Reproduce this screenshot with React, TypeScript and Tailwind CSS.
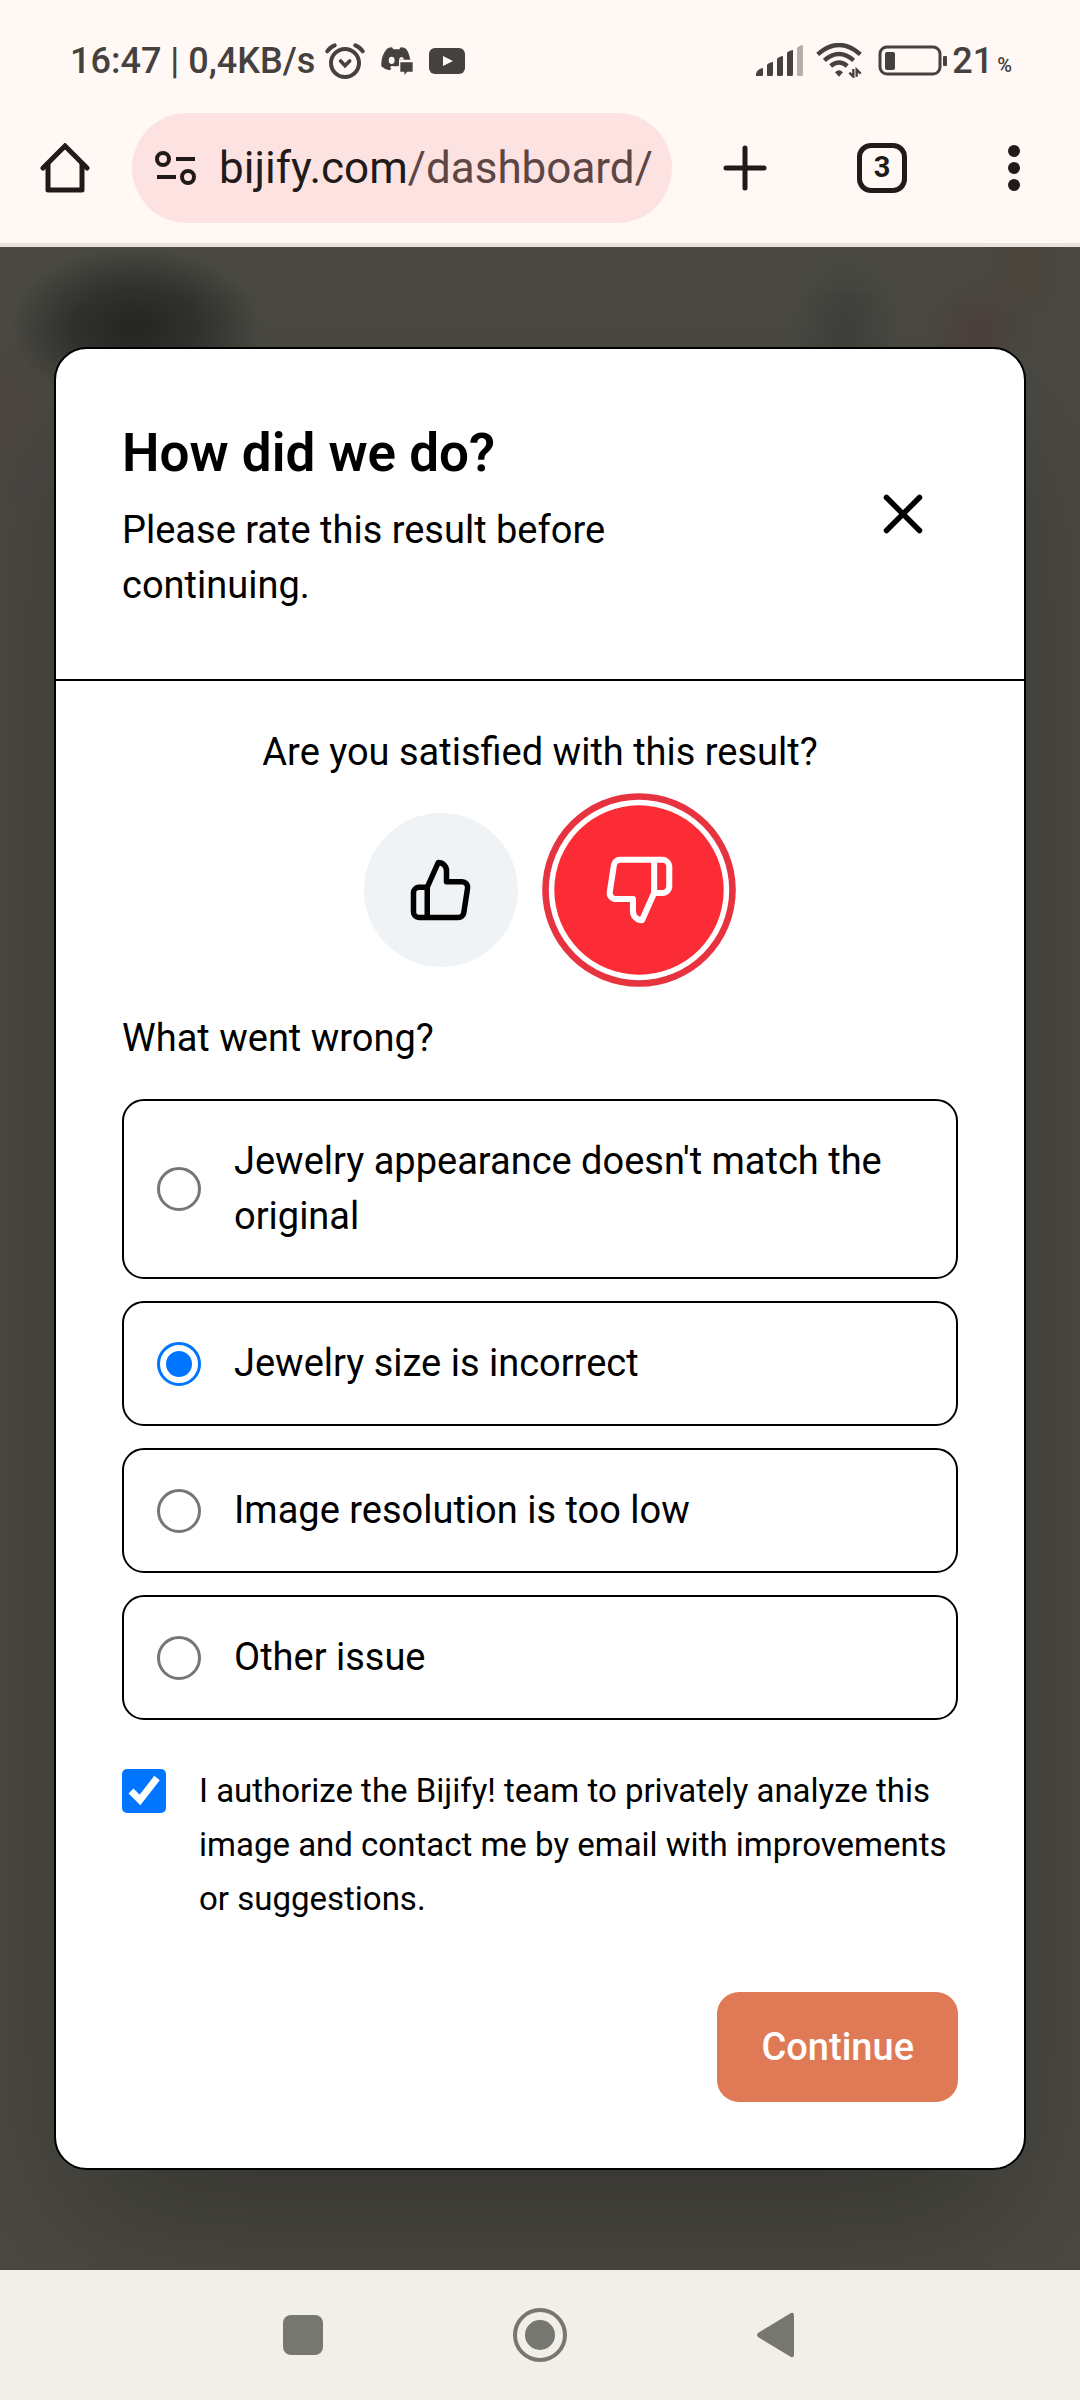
import { useState } from 'react';
import { FiThumbsDown, FiThumbsUp, FiX } from 'react-icons/fi';

const issues = [
  { id: 'appearance', label: "Jewelry appearance doesn't match the original" },
  { id: 'size', label: 'Jewelry size is incorrect' },
  { id: 'resolution', label: 'Image resolution is too low' },
  { id: 'other', label: 'Other issue' },
];

function StatusBar() {
  return (
    <div className="flex h-[113px] items-center justify-between pt-2 pr-[68px] pl-[70px] text-[#45413e]">
      <div className="flex items-center">
        <span className="text-[36px] font-medium">16:47 | 0,4KB/s</span>
        <svg className="ml-[10px] h-9 w-10" viewBox="0 0 120 108" fill="none" stroke="currentColor">
          <circle cx="60" cy="60" r="42" strokeWidth="12" />
          <path d="M7 25Q14 13 29 7M113 25Q106 13 91 7" strokeWidth="12" strokeLinecap="round" />
          <path d="M47 54l13 14 14-14" strokeWidth="11" strokeLinecap="round" />
        </svg>
        <svg className="ml-4 h-7 w-8" viewBox="0 0 96 84" fill="currentColor">
          <path
            fillRule="evenodd"
            d="M18 5Q26 1 33 1L37 7H55L59 1Q66 1 75 5Q84 16 88 38H54V56Q42 60 32 56L27 62L32 65L25 70Q10 67 1 58Q-1 26 18 5ZM32 29a9 11 0 1 0 0 22a9 11 0 0 0 0-22ZM63 30a9 10 0 0 0-9 9h16q-2-8-7-9Z"
          />
          <path d="M58 46H95V74H79L70 83V74H58Z" />
        </svg>
        <svg className="ml-4 h-7 w-9" viewBox="0 0 36 28">
          <rect x="0" y="1" width="36" height="26" rx="6" fill="currentColor" />
          <path d="M14 9v10l10-5z" fill="#fff8f4" />
        </svg>
      </div>
      <div className="flex items-center">
        <svg className="h-8 w-12" viewBox="0 0 48 32" fill="currentColor">
          <path d="M0 31v-2q1-5 7-6v7q0 1-1 1zM11 30V20q1-2 6-3v12q0 2-1 2h-4q-1 0-1-1zM21 30V14q1-2 6-3v18q0 2-1 2h-4q-1 0-1-1zM31 30V8q1-2 6-3v24q0 2-1 2h-4q-1 0-1-1z" />
          <path d="M41 30V3q1-2 6-3v29q0 2-1 2h-4q-1 0-1-1z" opacity="0.4" />
        </svg>
        <svg className="ml-3 h-[35px] w-[46px]" viewBox="0 0 138 105" fill="none" stroke="currentColor">
          <path d="M5 34Q69-22 133 34M25 52Q69 14 113 52M44 69Q69 48 94 69" strokeWidth="13" />
          <path d="M57 88q12-12 24 0l-12 13z" fill="currentColor" stroke="none" />
          <path d="M112 78v23l-12-12M122 101V80l12 12" strokeWidth="7" />
        </svg>
        <svg className="ml-4 h-8 w-[70px]" viewBox="0 0 70 32" fill="none">
          <rect x="2" y="2" width="60" height="27" rx="7" stroke="currentColor" strokeWidth="3" />
          <rect x="7" y="7" width="10" height="18" rx="2" fill="currentColor" />
          <rect x="65" y="11" width="4" height="10" rx="1" fill="currentColor" />
        </svg>
        <span className="ml-1 text-[36px] font-medium">21</span>
        <span className="mt-2 ml-1 text-[20px] font-medium">%</span>
      </div>
    </div>
  );
}

function BrowserBar() {
  return (
    <div className="flex h-[134px] items-start border-b-4 border-[#ebe1dd] pr-[60px] pl-10 text-[#211a18]">
      <div className="flex h-[110px] w-full items-center">
        <button type="button" aria-label="Home">
          <svg className="size-[50px]" viewBox="0 0 50 50" fill="none" stroke="currentColor" strokeWidth="5">
            <path d="M3 25L25 3l22 22" strokeLinecap="round" />
            <path d="M8 20v27h34V20" strokeLinejoin="round" />
          </svg>
        </button>
        <div className="ml-[42px] flex h-full min-w-0 flex-1 items-center rounded-full bg-[#fce2e1] pr-4 pl-[23px]">
          <svg className="h-9 w-[42px] shrink-0" viewBox="0 0 42 36" fill="none" stroke="currentColor" strokeWidth="4">
            <circle cx="8" cy="9" r="6" />
            <path d="M21 9h19M2 27h19" />
            <circle cx="33" cy="27" r="6" />
          </svg>
          <button
            type="button"
            className="ml-[22px] min-w-0 flex-1 text-left text-[44px] whitespace-nowrap"
          >
            bijify.com<span className="text-[#5d4644]">/dashboard/</span>
          </button>
        </div>
        <button type="button" aria-label="New tab" className="ml-[51px]">
          <svg className="h-[46px] w-11" viewBox="0 0 44 46" stroke="currentColor" strokeWidth="5" strokeLinecap="round">
            <path d="M3 23h38M22 3v40" />
          </svg>
        </button>
        <button
          type="button"
          aria-label="Tabs"
          className="ml-[90px] flex size-[50px] items-center justify-center rounded-[14px] border-[5px] border-current text-[29px] font-bold"
        >
          3
        </button>
        <button type="button" aria-label="Menu" className="ml-[101px]">
          <svg className="h-[46px] w-3" viewBox="0 0 12 46" fill="currentColor">
            <circle cx="6" cy="6" r="6" />
            <circle cx="6" cy="23" r="6" />
            <circle cx="6" cy="40" r="6" />
          </svg>
        </button>
      </div>
    </div>
  );
}

function FeedbackDialog() {
  const [satisfied, setSatisfied] = useState(false);
  const [issue, setIssue] = useState('size');
  const [authorized, setAuthorized] = useState(true);

  return (
    <div
      role="dialog"
      aria-labelledby="dialog-title"
      className="w-full rounded-[33px] border-2 border-black bg-white text-[38px] leading-[55px] text-black shadow-[0_69px_138px_-33px_rgba(0,0,0,0.3)]"
    >
      <div className="flex items-center justify-between gap-[66px] border-b-2 border-black p-[66px]">
        <div>
          <h2 id="dialog-title" className="mb-[11px] text-[53px] leading-[77px] font-semibold">
            How did we do?
          </h2>
          <p>Please rate this result before continuing.</p>
        </div>
        <button type="button" aria-label="Close" className="flex size-[110px] shrink-0 items-center justify-center">
          <FiX className="size-[66px]" />
        </button>
      </div>

      <div className="px-[66px] pt-[44px] pb-[66px]">
        <p className="text-center">Are you satisfied with this result?</p>
        <div className="mt-[33px] flex justify-center gap-[44px]">
          <button
            type="button"
            aria-label="Satisfied"
            aria-pressed={satisfied}
            onClick={() => setSatisfied(true)}
            className="flex size-[154px] items-center justify-center rounded-full bg-[#f0f3f6]"
          >
            <FiThumbsUp className="size-[66px]" />
          </button>
          <button
            type="button"
            aria-label="Not satisfied"
            aria-pressed={!satisfied}
            onClick={() => setSatisfied(false)}
            className="flex size-[154px] scale-110 items-center justify-center rounded-full bg-[#fb2c36] text-white ring-6 ring-[#e7333f] ring-offset-5"
          >
            <FiThumbsDown className="size-[66px]" />
          </button>
        </div>

        <fieldset className="mt-[44px]">
          <legend>What went wrong?</legend>
          <div className="mt-[33px] flex flex-col gap-[22px]">
            {issues.map(({ id, label }) => (
              <label key={id} className="flex items-center gap-[33px] rounded-[22px] border-2 border-black p-[33px]">
                <input
                  type="radio"
                  name="issue"
                  value={id}
                  checked={issue === id}
                  onChange={() => setIssue(id)}
                  className="flex size-[44px] shrink-0 appearance-none items-center justify-center rounded-full border-3 border-[#767676] before:size-[26px] before:rounded-full checked:border-[#0075ff] checked:before:bg-[#0075ff]"
                />
                <span>{label}</span>
              </label>
            ))}
          </div>
        </fieldset>

        <label className="mt-[44px] flex items-start gap-[33px] text-[33px] leading-[54px]">
          <span className="relative mt-[5px] size-[44px] shrink-0">
            <input
              type="checkbox"
              checked={authorized}
              onChange={(e) => setAuthorized(e.target.checked)}
              className="block size-[44px] appearance-none rounded-[5px] border-3 border-[#767676] checked:border-[#0075ff] checked:bg-[#0075ff]"
            />
            {authorized && (
              <svg
                className="pointer-events-none absolute inset-0 size-[44px]"
                viewBox="0 0 44 44"
                fill="none"
                stroke="#fff"
                strokeWidth="7"
              >
                <path d="M9 22l9 9L35 9" />
              </svg>
            )}
          </span>
          <span>
            I authorize the Bijify! team to privately analyze this image and contact me by email with improvements or
            suggestions.
          </span>
        </label>

        <div className="mt-[66px] flex justify-end">
          <button type="button" className="h-[110px] rounded-[22px] bg-[#df7956] px-[44px] font-medium text-white">
            Continue
          </button>
        </div>
      </div>
    </div>
  );
}

function NavigationBar() {
  return (
    <nav className="flex h-[130px] items-center justify-center gap-[190px] bg-[#f2efea] pr-1 text-[#777771]">
      <button type="button" aria-label="Recent apps">
        <span className="block size-10 rounded-lg bg-current" />
      </button>
      <button type="button" aria-label="Home screen">
        <svg className="size-[54px]" viewBox="0 0 54 54" fill="none" stroke="currentColor">
          <circle cx="27" cy="27" r="25" strokeWidth="4" />
          <circle cx="27" cy="27" r="15" fill="currentColor" stroke="none" />
        </svg>
      </button>
      <button type="button" aria-label="Back">
        <svg className="h-[46px] w-[37px]" viewBox="0 0 37 46" fill="currentColor">
          <path d="M1 21L34 1q3-1 3 2v40q0 3-3 2L1 25q-2-2 0-4z" />
        </svg>
      </button>
    </nav>
  );
}

export default function App() {
  return (
    <div className="flex min-h-screen flex-col bg-[#fff8f4] font-[Roboto,sans-serif]">
      <header>
        <StatusBar />
        <BrowserBar />
      </header>
      {/* dimmed page behind the dialog, with its logo and header icons blurred out */}
      <main className="flex flex-1 items-center bg-[#494842] bg-[radial-gradient(125px_80px_at_135px_80px,#252521,#31312d_50%,transparent),radial-gradient(50px_70px_at_845px_80px,#3f3f3b,transparent),radial-gradient(50px_60px_at_980px_85px,#4d3f3d,transparent),radial-gradient(50px_60px_at_1025px_25px,#4b443a,transparent),radial-gradient(60px_90px_at_0px_165px,#4e4541,transparent)] px-[54px] py-11">
        <FeedbackDialog />
      </main>
      <NavigationBar />
    </div>
  );
}
